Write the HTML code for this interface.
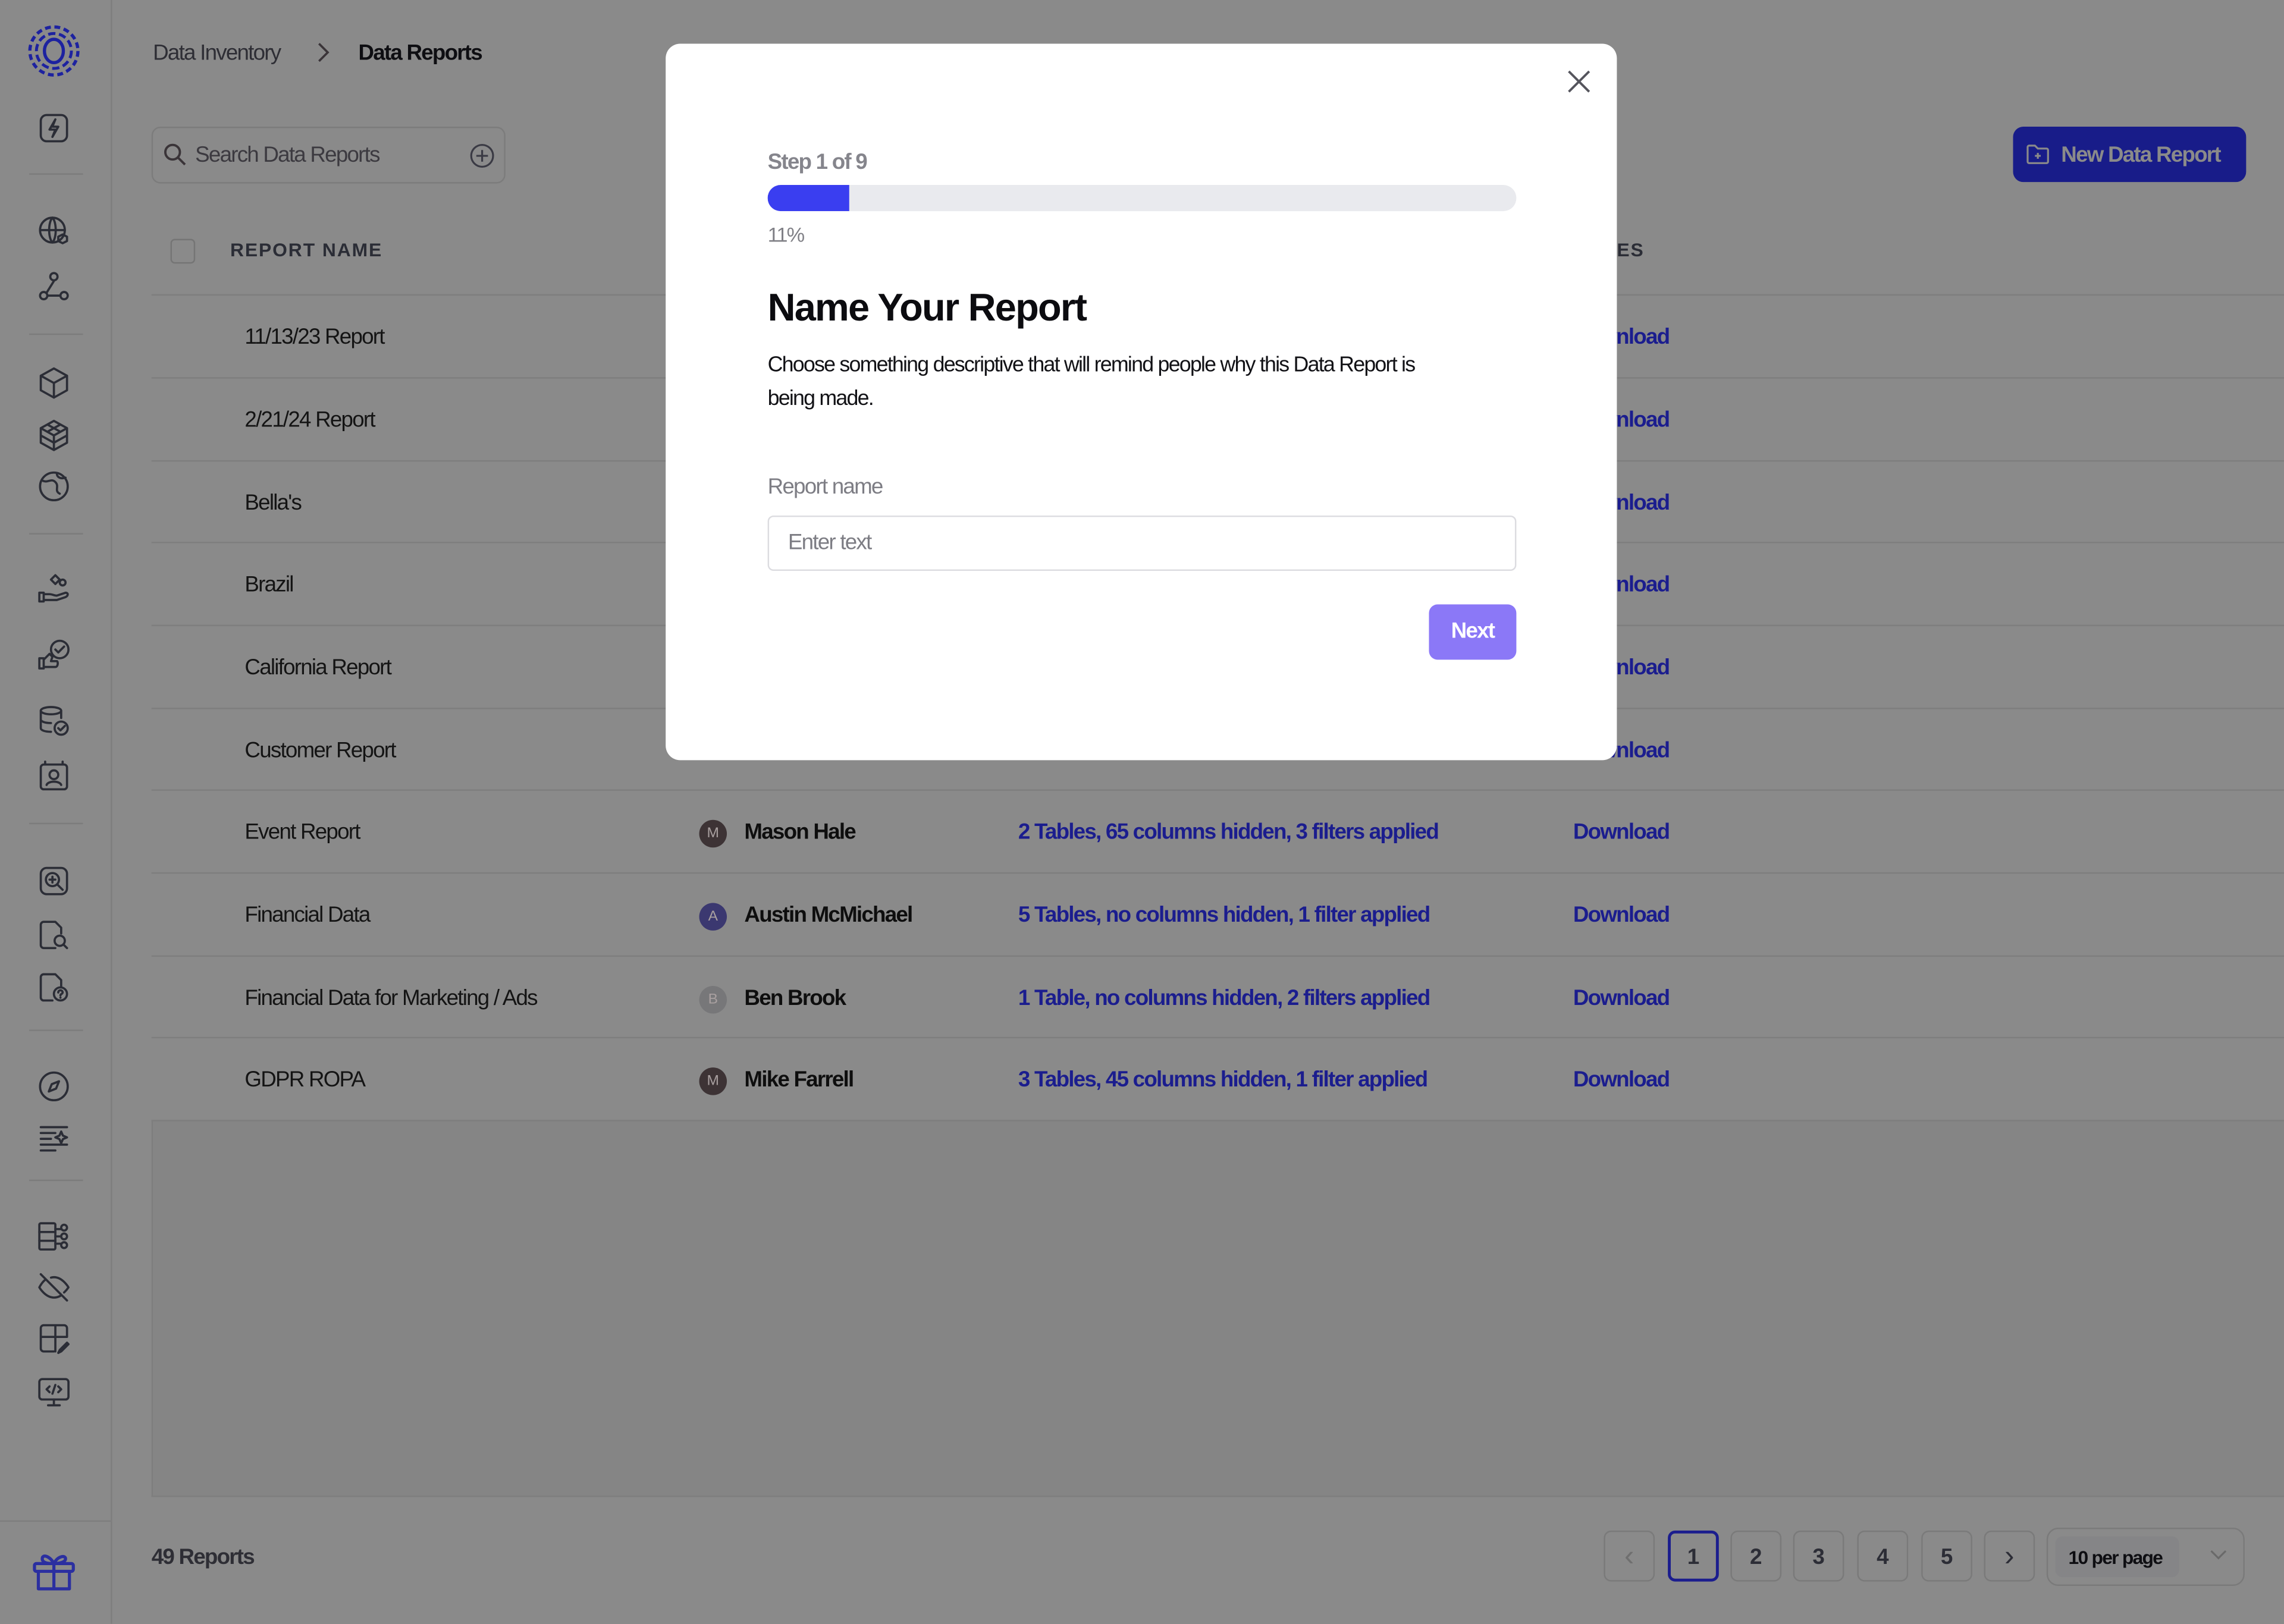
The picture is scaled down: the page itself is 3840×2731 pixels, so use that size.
<!DOCTYPE html>
<html><head><meta charset="utf-8"><style>
*{margin:0;padding:0;box-sizing:border-box}
html,body{width:3840px;height:2731px;overflow:hidden;background:#8a8a8a}
#w{position:absolute;left:0;top:0;width:1568px;height:1115px;transform:scale(2.44898);transform-origin:0 0;font-family:"Liberation Sans",sans-serif;letter-spacing:-0.045em;color:#111}
.a{position:absolute;white-space:nowrap}
.ic{position:absolute;left:25px;width:24px;height:24px;fill:none;stroke:#2b2d36;stroke-width:1.5;stroke-linecap:round;stroke-linejoin:round}
.sep{position:absolute;left:20px;width:37px;height:1px;background:#7c7c7c}
.row{position:absolute;left:104px;width:1464px;height:57px;border-top:1px solid #7e7e7e}
.nm{position:absolute;left:64px;top:20px;font-size:15px;color:#141414}
.av{position:absolute;left:376px;top:20px;width:19px;height:19px;border-radius:50%;color:#a9a0a0;font-size:10px;text-align:center;line-height:19px;letter-spacing:0}
.pn{position:absolute;left:407px;top:20px;font-size:15px;font-weight:bold;color:#0e0e0e}
.lk{position:absolute;left:595px;top:20px;font-size:15px;font-weight:bold;color:#1b1d8e}
.dl{position:absolute;left:976px;top:20px;font-size:15px;font-weight:bold;color:#1b1d8e}
.pg{position:absolute;top:1051px;width:35px;height:35px;border:1px solid #7a7a7a;border-radius:5px;text-align:center;line-height:35px;font-weight:bold;font-size:15px;color:#2c2d36;letter-spacing:0}
</style></head><body><div id="w">
<div class="a" style="left:76px;top:0;width:1px;height:1115px;background:#7e7e7e"></div>
<div class="a" style="left:0;top:1044px;width:76px;height:1px;background:#7e7e7e"></div>
<svg class="a" style="left:18px;top:16px" width="38" height="38" viewBox="0 0 38 38" fill="none" stroke="#1d22a0"><circle cx="19" cy="19" r="16.5" stroke-width="2.2" stroke-dasharray="4 2.5"/><circle cx="19" cy="19" r="12" stroke-width="2" stroke-dasharray="5 2.5"/><ellipse cx="19" cy="19" rx="6.5" ry="8" stroke-width="2.2"/></svg>
<svg class="ic" style="top:76px" viewBox="0 0 24 24"><rect x="3" y="3" width="18" height="18" rx="4"/><path d="M13 6l-4 7h4l-2 5 4-7h-4z"/></svg>
<div class="sep" style="top:119px"></div>
<svg class="ic" style="top:147px" viewBox="0 0 24 24"><circle cx="11" cy="11" r="8.5"/><path d="M2.5 11h17M11 2.5c-3 3-3 14 0 17M11 2.5c3 3 3 14 0 17"/><path d="M18 14l3 1.5v3l-3 1.5-3-1.5v-3z"/></svg>
<svg class="ic" style="top:185px" viewBox="0 0 24 24"><circle cx="12" cy="5" r="2.5"/><circle cx="5" cy="18" r="2.5"/><circle cx="19" cy="18" r="2.5"/><path d="M12 8l-5 8M8 18h8"/></svg>
<div class="sep" style="top:229px"></div>
<svg class="ic" style="top:251px" viewBox="0 0 24 24"><path d="M12 2l9 5v10l-9 5-9-5V7z M3 7l9 5 9-5M12 12v10"/></svg>
<svg class="ic" style="top:287px" viewBox="0 0 24 24"><path d="M12 2l9 5v10l-9 5-9-5V7z M3 7l9 5 9-5M12 12v10M7.5 4.5l9 5M16.5 4.5l-9 5M3 12l9 5 9-5"/></svg>
<svg class="ic" style="top:322px" viewBox="0 0 24 24"><circle cx="12" cy="12" r="9.5"/><path d="M4 8c4 2 6-2 9 1s-1 6 3 8M14 3c0 3 3 4 6 3"/></svg>
<div class="sep" style="top:366px"></div>
<svg class="ic" style="top:391px" viewBox="0 0 24 24"><path d="M2 16h3v6H2zM5 17h4c2 0 3 1 5 1l6-2c2 0 2 2 0 3l-6 2H5"/><path d="M10 7l3-3 3 3-3 3z"/><circle cx="18" cy="9" r="2"/></svg>
<svg class="ic" style="top:438px" viewBox="0 0 24 24"><path d="M2 14h3v7H2zM5 15l4-4 2 2-1 3h4c1 0 1 4-1 4H5"/><circle cx="16" cy="8" r="6"/><path d="M13 8l2 2 4-4"/></svg>
<svg class="ic" style="top:483px" viewBox="0 0 24 24"><ellipse cx="10" cy="5" rx="7" ry="2.5"/><path d="M3 5v12c0 1.5 3 2.5 7 2.5M3 11c0 1.5 3 2.5 7 2.5M17 5v5"/><circle cx="17" cy="17" r="4.5"/><path d="M15 17l1.5 1.5 3-3"/></svg>
<svg class="ic" style="top:521px" viewBox="0 0 24 24"><rect x="3" y="4" width="18" height="17" rx="2"/><path d="M6 2v2M18 2v2"/><circle cx="12" cy="11" r="3"/><path d="M7 18c1-3 9-3 10 0"/></svg>
<div class="sep" style="top:565px"></div>
<svg class="ic" style="top:593px" viewBox="0 0 24 24"><rect x="3" y="3" width="18" height="18" rx="4"/><circle cx="11" cy="11" r="4.5"/><path d="M14.5 14.5L18 18M11 9v4M9 11h4"/></svg>
<svg class="ic" style="top:630px" viewBox="0 0 24 24"><path d="M13 21H5a2 2 0 01-2-2V5a2 2 0 012-2h8l4 4v4"/><circle cx="16" cy="16" r="3.5"/><path d="M18.5 18.5L21 21"/></svg>
<svg class="ic" style="top:666px" viewBox="0 0 24 24"><path d="M11 21H5a2 2 0 01-2-2V5a2 2 0 012-2h8l4 4v4"/><circle cx="16.5" cy="16.5" r="4.5"/><path d="M15 15.5c0-2 3-2 3 0 0 1-1.5 1-1.5 2M16.5 19v.1"/></svg>
<div class="sep" style="top:707px"></div>
<svg class="ic" style="top:734px" viewBox="0 0 24 24"><circle cx="12" cy="12" r="9.5"/><path d="M15.5 8.5l-2 5-5 2 2-5z"/></svg>
<svg class="ic" style="top:769px" viewBox="0 0 24 24"><path d="M3 5h18M3 9h10M3 13h7M3 17h18M3 21h10M17 8l1.2 2.8 2.8 1.2-2.8 1.2L17 16l-1.2-2.8L13 12l2.8-1.2z"/></svg>
<div class="sep" style="top:810px"></div>
<svg class="ic" style="top:837px" viewBox="0 0 24 24"><rect x="2" y="3" width="11" height="18" rx="1"/><path d="M2 9h11M2 15h11M13 7h4M13 17h4M17 12h-4"/><circle cx="19" cy="6" r="2"/><circle cx="19" cy="12" r="2"/><circle cx="19" cy="18" r="2"/></svg>
<svg class="ic" style="top:872px" viewBox="0 0 24 24"><path d="M3 3l18 18M10 5.3A9 9 0 0112 5c6 0 10 7 10 7a17 17 0 01-3 3.5M6.5 6.5C4 8 2 12 2 12s4 7 10 7a9 9 0 004.5-1.2"/></svg>
<svg class="ic" style="top:907px" viewBox="0 0 24 24"><path d="M13 3H5a2 2 0 00-2 2v14a2 2 0 002 2h7M3 11h18V5a2 2 0 00-2-2h-6v18M17 21l-2 1 1-2 5-5 1 1z"/></svg>
<svg class="ic" style="top:944px" viewBox="0 0 24 24"><rect x="2" y="3" width="20" height="14" rx="2"/><path d="M8 21h8M12 17v4M9 8l-2 2 2 2M15 8l2 2-2 2M13 7l-2 6"/></svg>
<svg class="a" style="left:21px;top:1063px" width="32" height="32" viewBox="0 0 24 24" fill="none" stroke="#2b2fa0" stroke-width="1.6" stroke-linejoin="round"><rect x="2" y="8" width="20" height="4" rx="1"/><path d="M4 12v9h16v-9M12 8v13M12 8c-2-4-6-5-6-2.5S10 8 12 8c2 0 6-.5 6-2.5S14 4 12 8"/></svg>
<div class="a" style="left:105px;top:28px;font-size:15px;color:#2e2e35">Data Inventory</div>
<svg class="a" style="left:216px;top:28px" width="12" height="16" viewBox="0 0 12 16" fill="none" stroke="#3a3438" stroke-width="1.5"><path d="M3 2l6 6-6 6"/></svg>
<div class="a" style="left:246px;top:28px;font-size:15px;font-weight:bold;color:#0e0e12">Data Reports</div>
<div class="a" style="left:104px;top:87px;width:243px;height:39px;border:1px solid #7c7c7c;border-radius:6px"></div>
<svg class="a" style="left:111px;top:97px" width="18" height="18" viewBox="0 0 18 18" fill="none" stroke="#3a3438" stroke-width="1.6"><circle cx="7.5" cy="7.5" r="5"/><path d="M11 11l5 5"/></svg>
<div class="a" style="left:134px;top:98px;font-size:15px;color:#3c3a40">Search Data Reports</div>
<svg class="a" style="left:322px;top:98px" width="18" height="18" viewBox="0 0 18 18" fill="none" stroke="#3a3a44" stroke-width="1.3"><circle cx="9" cy="9" r="7.5"/><path d="M9 5v8M5 9h8"/></svg>
<div class="a" style="left:1382px;top:87px;width:160px;height:38px;background:#181c89;border-radius:7px"></div>
<svg class="a" style="left:1390px;top:97px" width="18" height="18" viewBox="0 0 18 18" fill="none" stroke="#8a8a8a" stroke-width="1.3"><path d="M2 4a1 1 0 011-1h4l2 2h6a1 1 0 011 1v8a1 1 0 01-1 1H3a1 1 0 01-1-1z M9 8v4M7 10h4"/></svg>
<div class="a" style="left:1415px;top:98px;font-size:15px;font-weight:bold;color:#8a8a8a">New Data Report</div>
<div class="a" style="left:117px;top:164px;width:17px;height:17px;border:1px solid #757575;border-radius:3px"></div>
<div class="a" style="left:158px;top:164px;font-size:13px;font-weight:bold;letter-spacing:0.06em;color:#2b2d36">REPORT NAME</div>
<div class="a" style="left:1110px;top:164px;font-size:13px;font-weight:bold;letter-spacing:0.06em;color:#2b2d36">ES</div>
<div class="row" style="top:202px"><div class="nm">11/13/23 Report</div><div class="dl">Download</div></div>
<div class="row" style="top:259px"><div class="nm">2/21/24 Report</div><div class="dl">Download</div></div>
<div class="row" style="top:316px"><div class="nm">Bella's</div><div class="dl">Download</div></div>
<div class="row" style="top:372px"><div class="nm">Brazil</div><div class="dl">Download</div></div>
<div class="row" style="top:429px"><div class="nm">California Report</div><div class="dl">Download</div></div>
<div class="row" style="top:486px"><div class="nm">Customer Report</div><div class="dl">Download</div></div>
<div class="row" style="top:542px"><div class="nm">Event Report</div><div class="av" style="background:#3d3335">M</div><div class="pn">Mason Hale</div><div class="lk">2 Tables, 65 columns hidden, 3 filters applied</div><div class="dl">Download</div></div>
<div class="row" style="top:599px"><div class="nm">Financial Data</div><div class="av" style="background:#3b3870">A</div><div class="pn">Austin McMichael</div><div class="lk">5 Tables, no columns hidden, 1 filter applied</div><div class="dl">Download</div></div>
<div class="row" style="top:656px"><div class="nm">Financial Data for Marketing / Ads</div><div class="av" style="background:#777779">B</div><div class="pn">Ben Brook</div><div class="lk">1 Table, no columns hidden, 2 filters applied</div><div class="dl">Download</div></div>
<div class="row" style="top:712px"><div class="nm">GDPR ROPA</div><div class="av" style="background:#3d3335">M</div><div class="pn">Mike Farrell</div><div class="lk">3 Tables, 45 columns hidden, 1 filter applied</div><div class="dl">Download</div></div>
<div class="a" style="left:104px;top:769px;width:1464px;height:259px;background:#858585;border-top:1px solid #7e7e7e;border-left:1px solid #7e7e7e;border-bottom:1px solid #7e7e7e"></div>
<div class="a" style="left:104px;top:1061px;font-size:15px;font-weight:bold;color:#2e2e35">49 Reports</div>
<div class="pg" style="left:1101px;color:#6f6f6f;font-weight:normal;font-size:20px">&lsaquo;</div>
<div class="pg" style="left:1145px;border:2px solid #1b1d8e;line-height:33px">1</div>
<div class="pg" style="left:1188px">2</div>
<div class="pg" style="left:1231px">3</div>
<div class="pg" style="left:1275px">4</div>
<div class="pg" style="left:1319px">5</div>
<div class="pg" style="left:1362px;font-weight:normal;font-size:20px">&rsaquo;</div>
<div class="a" style="left:1405px;top:1049px;width:136px;height:40px;border:1px solid #7a7a7a;border-radius:8px"></div>
<div class="a" style="left:1411px;top:1055px;width:85px;height:28px;background:#858587;border-radius:5px"></div>
<div class="a" style="left:1420px;top:1062px;font-size:13px;font-weight:bold;color:#0e0e12">10 per page</div>
<svg class="a" style="left:1516px;top:1063px" width="14" height="10" viewBox="0 0 14 10" fill="none" stroke="#6a6a6a" stroke-width="1.3"><path d="M2 2l5 5 5-5"/></svg>
<div class="a" style="left:457px;top:30px;width:653px;height:492px;background:#fff;border-radius:10px"></div>
<svg class="a" style="left:1075px;top:47px" width="18" height="18" viewBox="0 0 18 18" fill="none" stroke="#55555d" stroke-width="1.6"><path d="M2 2l14 14M16 2L2 16"/></svg>
<div class="a" style="left:527px;top:103px;font-size:15px;font-weight:bold;color:#85858c">Step 1 of 9</div>
<div class="a" style="left:527px;top:127px;width:514px;height:18px;background:#e9eaee;border-radius:9px;overflow:hidden"><div style="width:56px;height:18px;background:#3a3ef0"></div></div>
<div class="a" style="left:527px;top:153px;font-size:14px;color:#808086">11%</div>
<div class="a" style="left:527px;top:196px;font-size:26.5px;font-weight:bold;color:#0c0c10">Name Your Report</div>
<div class="a" style="left:527px;top:240px;font-size:14.6px;line-height:23px;color:#121216;white-space:normal;width:470px">Choose something descriptive that will remind people why this Data Report is being made.</div>
<div class="a" style="left:527px;top:326px;font-size:15px;color:#7d7d84">Report name</div>
<div class="a" style="left:527px;top:354px;width:514px;height:38px;border:1px solid #dcdce0;border-radius:4px"></div>
<div class="a" style="left:541px;top:364px;font-size:15px;color:#7d7d84">Enter text</div>
<div class="a" style="left:981px;top:415px;width:60px;height:38px;background:#8b78f7;border-radius:6px;color:#fff;font-weight:bold;font-size:15px;text-align:center;line-height:38px">Next</div>
</div></body></html>
